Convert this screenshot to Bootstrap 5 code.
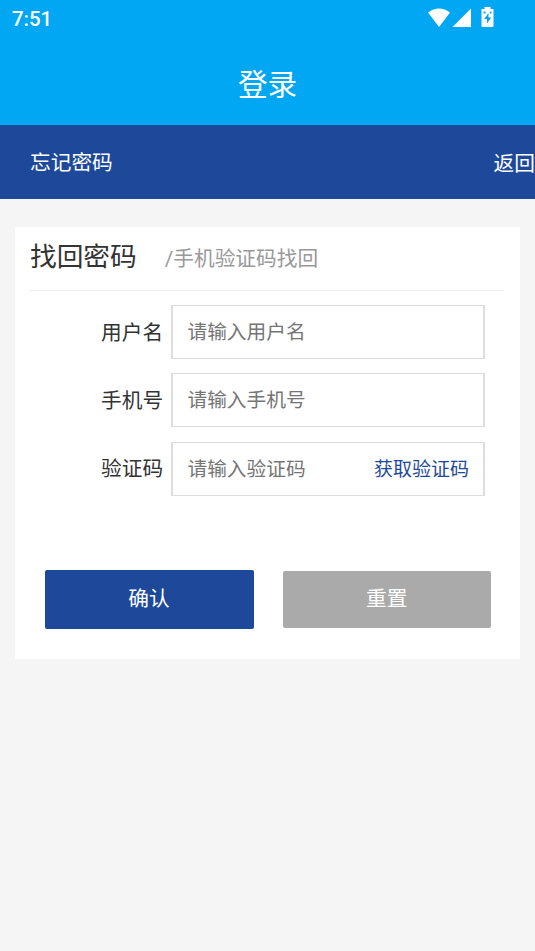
<!DOCTYPE html>
<html lang="zh-CN">
<head>
<meta charset="utf-8">
<meta name="viewport" content="width=device-width, initial-scale=1">
<title>忘记密码</title>
<link href="https://cdn.jsdelivr.net/npm/bootstrap@5.3.0/dist/css/bootstrap.min.css" rel="stylesheet">
<style>
body { font-family: Roboto, "Noto Sans CJK SC", sans-serif; background: #f5f5f5; color: #333; line-height: 1; }
.status-bar { height: 36px; background: #02a7f3; font-size: 20.4px; font-weight: 500; padding-left: 12px; padding-right: 40px; }
.clock { padding-top: 2px; }
.app-title { height: 89px; background: #02a7f3; font-size: 29.6px; padding-top: 10px; }
.page-bar { height: 74px; background: #1e499a; font-size: 20.7px; padding: 2px 0 0 30px; }
.back-link { padding-top: 2px; }
.panel { margin: 28px 15px 0; height: 432px; background: #fff; }
.panel-head { margin: 0 16px 0 14px; height: 64px; border-bottom: 1px solid #eee; padding: 0 0 3px 1px; }
.panel-name { font-size: 26.7px; font-weight: 400; }
.panel-sub { font-size: 20.7px; color: #999; margin-left: 28px; padding-top: 4px; }
.fields { padding: 14px 35px 0 86px; display: grid; grid-template-columns: minmax(0, 1fr); row-gap: 14.4px; }
.field-label { font-size: 20.7px; width: 70px; padding-top: 2px; }
.field-box { min-width: 0; height: 54px; border: 2px solid #ddd; border-width: 1.6px 2px; padding: 1px 14px 0 14.5px; background: #fff; }
.field-box input { font: inherit; font-size: 19.7px; line-height: 30px; height: 32px; min-width: 0; }
.field-box input::placeholder { color: #757575; opacity: 1; }
.code-link { font-size: 19px; color: #1e499a; white-space: nowrap; }
.actions { padding: 74px 29px 0 29.5px; gap: 29.5px; }
.act { border: 0; border-radius: 2px; color: #fff; font-size: 20.7px; line-height: 1; padding: 0; }
.act-ok { width: 209px; height: 59px; background: #1e499a; }
.act-reset { width: 207.5px; height: 57px; background: #aaa; }
</style>
</head>
<body>
<header class="text-white">
  <div class="status-bar d-flex align-items-center justify-content-between">
    <span class="clock">7:51</span>
    <svg width="68" height="22" viewBox="427 7 68 22" fill="#fff">
      <path d="M428 12.5Q439 4.5 450 12.5L439 27Z"/>
      <path d="M471 8.5V27H452.5Z"/>
      <path fill-rule="evenodd" d="M484.5 7h6v2h3v17q0 1-1 1h-10q-1 0-1-1V9h3ZM488.5 13l-4.5 6h3v4.5l4.2-6h-2.7ZM483.5 11.5v2h2v-2ZM489.8 11.5v2h1.7v-2Z"/>
    </svg>
  </div>
  <div class="app-title d-flex align-items-center justify-content-center">登录</div>
  <div class="page-bar d-flex align-items-center justify-content-between">
    <span>忘记密码</span>
    <a href="#" class="back-link text-white text-decoration-none">返回</a>
  </div>
</header>
<main class="panel">
  <div class="panel-head d-flex align-items-center">
    <h1 class="panel-name m-0">找回密码</h1>
    <span class="panel-sub">/手机验证码找回</span>
  </div>
  <form>
    <div class="fields">
      <div class="d-flex align-items-center">
        <label class="field-label flex-shrink-0" for="user">用户名</label>
        <div class="field-box d-flex align-items-center flex-grow-1"><input id="user" class="border-0 p-0 bg-transparent w-100" placeholder="请输入用户名"></div>
      </div>
      <div class="d-flex align-items-center">
        <label class="field-label flex-shrink-0" for="phone">手机号</label>
        <div class="field-box d-flex align-items-center flex-grow-1"><input id="phone" class="border-0 p-0 bg-transparent w-100" placeholder="请输入手机号"></div>
      </div>
      <div class="d-flex align-items-center">
        <label class="field-label flex-shrink-0" for="code">验证码</label>
        <div class="field-box d-flex align-items-center flex-grow-1"><input id="code" class="border-0 p-0 bg-transparent w-100" placeholder="请输入验证码"><a href="#" class="code-link text-decoration-none">获取验证码</a></div>
      </div>
    </div>
    <div class="actions d-flex align-items-center">
      <button type="button" class="act act-ok">确认</button>
      <button type="reset" class="act act-reset">重置</button>
    </div>
  </form>
</main>
<script src="https://cdn.jsdelivr.net/npm/bootstrap@5.3.0/dist/js/bootstrap.bundle.min.js"></script>
</body>
</html>
